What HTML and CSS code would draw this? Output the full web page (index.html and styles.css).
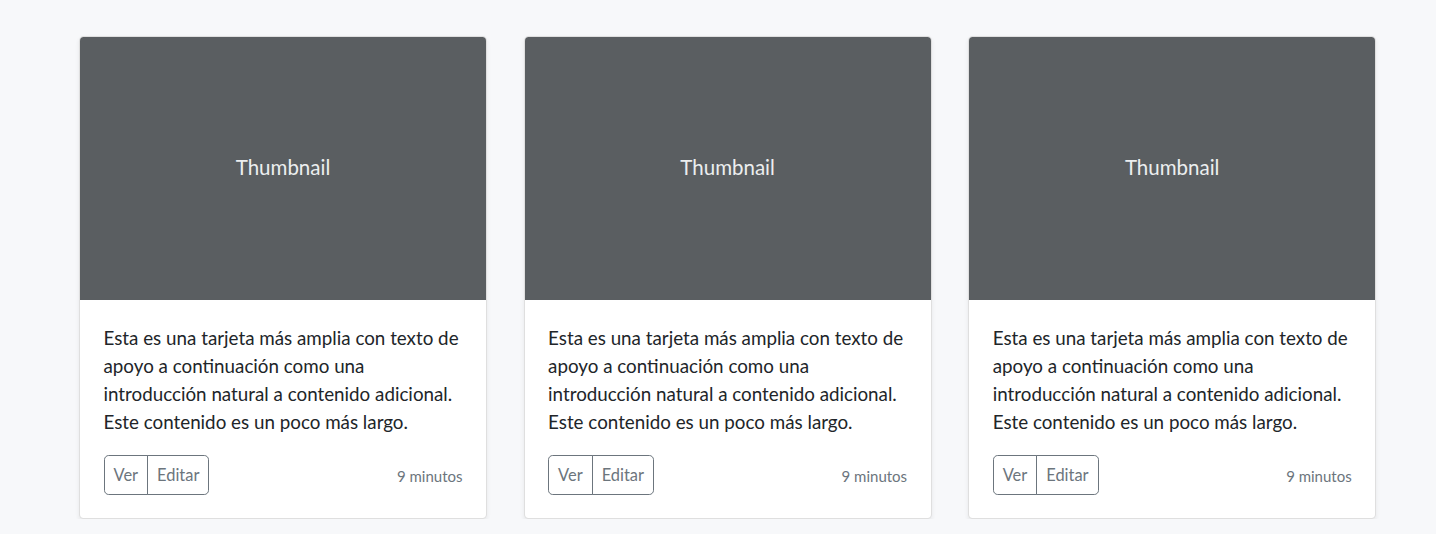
FILE: index.html
```html
<!DOCTYPE html>
<html lang="es">
<head>
<meta charset="utf-8">
<title>Álbum</title>
<link rel="stylesheet" href="styles.css">
</head>
<body>
<main class="album">
  <div class="grid">
    <div class="card">
      <div class="thumb"><span>Thumbnail</span></div>
      <div class="card-body">
        <p class="card-text">Esta es una tarjeta más amplia con texto de apoyo a continuación como una introducción natural a contenido adicional. Este contenido es un poco más largo.</p>
        <div class="card-footer-row">
          <div class="btn-group">
            <button type="button" class="btn">Ver</button>
            <button type="button" class="btn">Editar</button>
          </div>
          <small class="muted">9 minutos</small>
        </div>
      </div>
    </div>
    <div class="card">
      <div class="thumb"><span>Thumbnail</span></div>
      <div class="card-body">
        <p class="card-text">Esta es una tarjeta más amplia con texto de apoyo a continuación como una introducción natural a contenido adicional. Este contenido es un poco más largo.</p>
        <div class="card-footer-row">
          <div class="btn-group">
            <button type="button" class="btn">Ver</button>
            <button type="button" class="btn">Editar</button>
          </div>
          <small class="muted">9 minutos</small>
        </div>
      </div>
    </div>
    <div class="card">
      <div class="thumb"><span>Thumbnail</span></div>
      <div class="card-body">
        <p class="card-text">Esta es una tarjeta más amplia con texto de apoyo a continuación como una introducción natural a contenido adicional. Este contenido es un poco más largo.</p>
        <div class="card-footer-row">
          <div class="btn-group">
            <button type="button" class="btn">Ver</button>
            <button type="button" class="btn">Editar</button>
          </div>
          <small class="muted">9 minutos</small>
        </div>
      </div>
    </div>
  </div>
</main>
</body>
</html>
```

FILE: styles.css
```css
* { box-sizing: border-box; }

html, body {
  margin: 0;
  padding: 0;
  background: #f7f8fa;
  font-family: Lato, "Noto Sans", sans-serif;
  color: #212529;
  font-size: 18.8px;
  line-height: 1.5;
}

.album {
  padding: 36px 0 0 79px;
}

.grid {
  display: grid;
  grid-template-columns: repeat(3, 408px);
  column-gap: 36.6px;
}

.card {
  background: #fff;
  border: 1px solid rgba(0, 0, 0, 0.125);
  border-radius: 4.7px;
  box-shadow: 0 2.35px 4.7px rgba(0, 0, 0, 0.075);
  display: flex;
  flex-direction: column;
  overflow: hidden;
}

.thumb {
  height: 263px;
  background: #5a5e61;
  color: #eceeef;
  display: flex;
  align-items: center;
  justify-content: center;
  font-size: 20.5px;
  padding-bottom: 3px;
}

.card-body {
  padding: 23.5px;
}

.card-text {
  margin: 0 0 18.8px;
}

.card-footer-row {
  display: flex;
  justify-content: space-between;
  align-items: center;
}

.btn-group {
  display: inline-flex;
}

.btn {
  font-family: inherit;
  font-size: 16.45px;
  line-height: 1.5;
  color: #6c757d;
  background: transparent;
  border: 1px solid #6c757d;
  padding: 7.4px 9px 5.4px;
  margin: 0;
  cursor: pointer;
}

.btn:first-child {
  border-radius: 4.7px 0 0 4.7px;
}

.btn + .btn {
  margin-left: -1px;
  border-radius: 0 4.7px 4.7px 0;
}

.muted {
  color: #6c757d;
  font-size: 15px;
  padding-top: 2px;
}
```
